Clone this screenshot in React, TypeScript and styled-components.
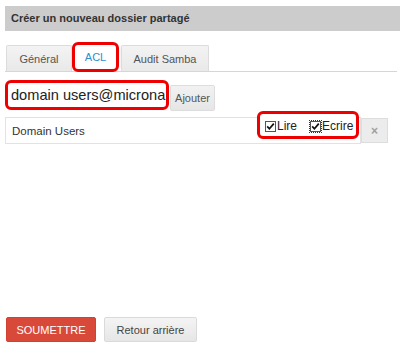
import React from "react";
import styled, { createGlobalStyle } from "styled-components";

const Global = createGlobalStyle`
  html, body { margin: 0; padding: 0; background: #fff; }
  body { font-family: "Liberation Sans", Arial, sans-serif; color: #333; }
  * { box-sizing: border-box; }
`;

const Page = styled.div`
  height: 354px;
  padding: 6px 0 12px 5px;
  display: flex;
  flex-direction: column;
  overflow: hidden;
`;

const Header = styled.div`
  height: 25px;
  background: #cccccc;
  padding-left: 6px;
  line-height: 25px;
  font-size: 11px;
  font-weight: bold;
  color: #333;
`;

const TabBar = styled.div`
  margin-top: 11px;
  margin-right: 3px;
  display: flex;
  align-items: flex-end;
  border-bottom: 1px solid #d6d6d6;
  padding-left: 1px;
`;

const Tab = styled.div<{ $w: number }>`
  width: ${(p) => p.$w}px;
  height: 26px;
  display: flex;
  align-items: center;
  justify-content: center;
  background: linear-gradient(#f3f3f3, #e9e9e9);
  border: 1px solid #dcdcdc;
  border-bottom: none;
  border-radius: 2px 2px 0 0;
  font-size: 11px;
  color: #555;
`;

const Highlight = styled.div`
  border: 3px solid #ee0000;
  border-radius: 6px;
`;

const TabHighlight = styled(Highlight)`
  width: 47px;
  height: 30px;
  margin-bottom: -1px;
  margin-right: 2px;
  background: #fff;
  display: flex;
  align-items: center;
  justify-content: center;
  font-size: 11px;
  color: #2a8fcf;
`;

const InputRow = styled.div`
  margin-top: 8px;
  display: flex;
  align-items: flex-start;
  gap: 1px;
`;

const InputHighlight = styled(Highlight)`
  width: 164px;
  height: 30px;
  display: flex;
  align-items: center;
  padding-left: 3px;
  overflow: hidden;
`;

const TextInput = styled.input`
  border: none;
  outline: none;
  width: 100%;
  padding: 0;
  font-family: "Liberation Sans", Arial, sans-serif;
  font-size: 14.6px;
  color: #222;
  background: transparent;
`;

const SmallButton = styled.button`
  margin-top: 5px;
  height: 26px;
  width: 45px;
  padding: 0;
  background: linear-gradient(#f2f2f2, #e6e6e6);
  border: 1px solid #dddddd;
  border-radius: 2px;
  font-family: "Liberation Sans", Arial, sans-serif;
  font-size: 11px;
  color: #555;
`;

const AclRow = styled.div`
  margin-top: 6px;
  display: flex;
  align-items: flex-start;
`;

const AclCell = styled.div`
  width: 356px;
  height: 27px;
  border: 1px solid #e2e2e2;
  display: flex;
  align-items: center;
  padding-left: 6px;
  padding-right: 1px;
  font-size: 11.5px;
  color: #333;
`;

const Grow = styled.span`
  flex: 1;
`;

const CheckGroup = styled(Highlight)`
  align-self: flex-start;
  margin-top: -7px;
  width: 102px;
  height: 28px;
  display: flex;
  align-items: center;
  padding-left: 5px;
  padding-top: 2px;
  background: #fff;
  font-size: 12px;
  color: #222;
  white-space: nowrap;
`;

const CheckLabel = styled.label<{ $gap?: number }>`
  display: flex;
  align-items: center;
  margin-left: ${(p) => p.$gap ?? 0}px;
`;

const Box = styled.span<{ $focus?: boolean }>`
  display: inline-flex;
  width: 11px;
  height: 11px;
  margin-right: 1px;
  outline: ${(p) => (p.$focus ? "1px dotted #333" : "none")};
`;

const RemoveButton = styled.button`
  margin-top: 1px;
  width: 27px;
  height: 25px;
  padding: 0;
  background: #ececec;
  border: 1px solid #dddddd;
  display: flex;
  align-items: center;
  justify-content: center;
  font-family: "Liberation Sans", Arial, sans-serif;
  font-size: 12px;
  font-weight: bold;
  color: #a0a0a0;
`;

const Actions = styled.div`
  margin-top: auto;
  display: flex;
  gap: 8px;
  padding-left: 1px;
`;

const ActionButton = styled.button<{ $primary?: boolean; $w: number }>`
  width: ${(p) => p.$w}px;
  height: 25px;
  padding: 0;
  border-radius: 2px;
  font-family: "Liberation Sans", Arial, sans-serif;
  font-size: 11px;
  background: ${(p) => (p.$primary ? "#d9493a" : "linear-gradient(#f4f4f4, #e6e6e6)")};
  border: 1px solid ${(p) => (p.$primary ? "#d04232" : "#dadada")};
  color: ${(p) => (p.$primary ? "#fff" : "#444")};
`;

const CheckIcon = () => (
  <svg width="11" height="11" viewBox="0 0 11 11">
    <rect x="0.5" y="0.5" width="10" height="10" fill="#fff" stroke="#555" />
    <path d="M2.2 5.4 L4.4 7.8 L8.8 2.6" fill="none" stroke="#111" strokeWidth="1.7" />
  </svg>
);

export default function App() {
  return (
    <>
      <Global />
      <Page>
        <Header>Créer un nouveau dossier partagé</Header>
        <TabBar>
          <Tab $w={66}>Général</Tab>
          <TabHighlight>ACL</TabHighlight>
          <Tab $w={88}>Audit Samba</Tab>
        </TabBar>
        <InputRow>
          <InputHighlight>
            <TextInput defaultValue="domain users@microna" />
          </InputHighlight>
          <SmallButton>Ajouter</SmallButton>
        </InputRow>
        <AclRow>
          <AclCell>
            Domain Users
            <Grow />
            <CheckGroup>
              <CheckLabel>
                <Box>
                  <CheckIcon />
                </Box>
                Lire
              </CheckLabel>
              <CheckLabel $gap={13}>
                <Box $focus>
                  <CheckIcon />
                </Box>
                Ecrire
              </CheckLabel>
            </CheckGroup>
          </AclCell>
          <RemoveButton>×</RemoveButton>
        </AclRow>
        <Actions>
          <ActionButton $primary $w={90}>SOUMETTRE</ActionButton>
          <ActionButton $w={93}>Retour arrière</ActionButton>
        </Actions>
      </Page>
    </>
  );
}
